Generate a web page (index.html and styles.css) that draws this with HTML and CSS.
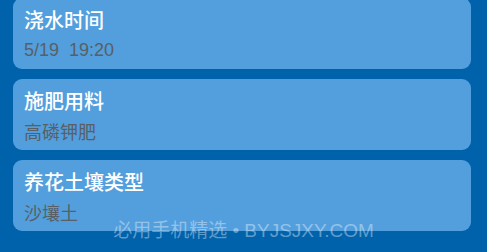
FILE: index.html
```html
<!DOCTYPE html>
<html lang="zh">
<head>
<meta charset="utf-8">
<link rel="stylesheet" href="styles.css">
</head>
<body>
<div class="list">
  <div class="card">
    <div class="title">浇水时间</div>
    <div class="value num">5/19&nbsp;&nbsp;19:20</div>
  </div>
  <div class="card">
    <div class="title">施肥用料</div>
    <div class="value">高磷钾肥</div>
  </div>
  <div class="card">
    <div class="title">养花土壤类型</div>
    <div class="value">沙壤土</div>
  </div>
</div>
<div class="watermark">必用手机精选 • BYJSJXY.COM</div>
</body>
</html>
```

FILE: styles.css
```css
html, body {
  margin: 0;
  padding: 0;
}
body {
  width: 487px;
  height: 252px;
  overflow: hidden;
  background: #0062ab;
  font-family: "Noto Sans CJK SC", "Noto Sans", sans-serif;
  position: relative;
}
.list {
  display: flex;
  flex-direction: column;
  gap: 10px;
  padding: 0 16px 0 13px;
  margin-top: -2px;
}
.card {
  background: #539fdd;
  border-radius: 9px;
  height: 71px;
  box-sizing: border-box;
  padding: 8px 11px 0;
}
.title {
  color: #ffffff;
  font-size: 20px;
  line-height: 28px;
  font-weight: 500;
}
.value {
  color: #585f66;
  font-size: 18px;
  line-height: 28px;
  margin-top: 2px;
}
.value.num {
  font-family: "Liberation Sans", "Noto Sans CJK SC", sans-serif;
}
.watermark {
  position: absolute;
  left: 0;
  right: 0;
  top: 217px;
  text-align: center;
  color: rgba(255, 255, 255, 0.38);
  font-size: 19px;
  line-height: 28px;
  font-family: "Liberation Sans", "Noto Sans CJK SC", sans-serif;
}
```
